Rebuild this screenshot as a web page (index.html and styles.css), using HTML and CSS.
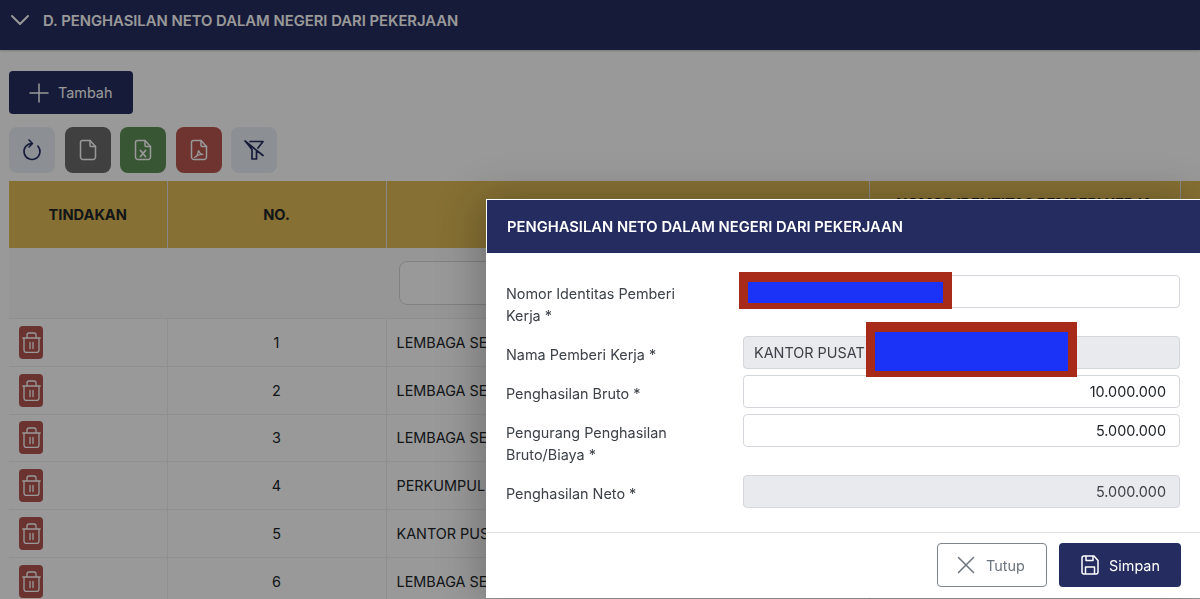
FILE: index.html
```html
<!DOCTYPE html>
<html lang="id">
<head>
<meta charset="utf-8">
<title>Penghasilan Neto Dalam Negeri dari Pekerjaan</title>
<link rel="stylesheet" href="styles.css">
</head>
<body>
<svg class="defs" width="0" height="0" aria-hidden="true">
  <symbol id="trash" viewBox="0 0 19 21">
    <path d="M.8 6h17.400M2 6v12a2.500 2.500 0 0 0 2.500 2.500h10A2.500 2.500 0 0 0 17 18V6M5 6V3a2 2 0 0 1 2-2h5a2 2 0 0 1 2 2v3M8 10.500v6M11 10.500v6" fill="none" stroke="currentColor" stroke-width="1.300" stroke-linecap="round" stroke-linejoin="round"/>
  </symbol>
</svg>

<main class="page">
  <header class="section-head">
    <svg class="chev" width="20" height="12" viewBox="0 0 20 12"><path d="M2 2l8 8 8-8" fill="none" stroke="currentColor" stroke-width="2" stroke-linecap="round" stroke-linejoin="round"/></svg>
    <h2 class="section-title">D. PENGHASILAN NETO DALAM NEGERI DARI PEKERJAAN</h2>
  </header>

  <section class="content">
    <button class="btn-add" type="button">
      <svg width="20" height="20" viewBox="0 0 20 20"><path d="M10 1v18M1 10h18" fill="none" stroke="currentColor" stroke-width="1.500" stroke-linecap="round"/></svg>
      Tambah
    </button>

    <div class="toolbar">
      <button class="tool tool-light" type="button" aria-label="Muat ulang">
        <svg width="24" height="24" viewBox="0 0 24 24" fill="none" stroke="currentColor" stroke-width="1.600" stroke-linecap="round" stroke-linejoin="round"><path d="M12 5.500A8 8 0 1 0 17.800 8M9 2l3.500 3.500L9 9"/></svg>
      </button>
      <button class="tool tool-gray" type="button" aria-label="Dokumen">
        <svg width="24" height="24" viewBox="0 0 24 24" fill="none" stroke="currentColor" stroke-width="1.500" stroke-linecap="round" stroke-linejoin="round"><path d="M14 2.500v5a1 1 0 0 0 1 1h4.500"/><path d="M6.500 2.500H14l5.500 6V19a2.500 2.500 0 0 1-2.500 2.500H7A2.500 2.500 0 0 1 4.500 19V4.500a2 2 0 0 1 2-2z"/></svg>
      </button>
      <button class="tool tool-green" type="button" aria-label="Excel">
        <svg width="24" height="24" viewBox="0 0 24 24" fill="none" stroke="currentColor" stroke-width="1.500" stroke-linecap="round" stroke-linejoin="round"><path d="M14 2.500v5a1 1 0 0 0 1 1h4.500"/><path d="M6.500 2.500H14l5.500 6V19a2.500 2.500 0 0 1-2.500 2.500H7A2.500 2.500 0 0 1 4.500 19V4.500a2 2 0 0 1 2-2z"/><path d="M9.500 12.500l5 6M14.500 12.500l-5 6" stroke-width="1.800"/></svg>
      </button>
      <button class="tool tool-red" type="button" aria-label="PDF">
        <svg width="24" height="24" viewBox="0 0 24 24" fill="none" stroke="currentColor" stroke-width="1.500" stroke-linecap="round" stroke-linejoin="round"><path d="M14 2.500v5a1 1 0 0 0 1 1h4.500"/><path d="M6.500 2.500H14l5.500 6V19a2.500 2.500 0 0 1-2.500 2.500H7A2.500 2.500 0 0 1 4.500 19V4.500a2 2 0 0 1 2-2z"/><path d="M7.500 19.500c2-1 3.500-3.500 4-7 .8 2.500 2 3.500 4.500 4-3-.2-6 .8-8.500 3z" stroke-width="1.200"/></svg>
      </button>
      <button class="tool tool-light" type="button" aria-label="Hapus filter">
        <svg width="24" height="24" viewBox="0 0 24 24" fill="none" stroke="currentColor" stroke-width="1.700" stroke-linecap="round" stroke-linejoin="round"><path d="M8 3.500h13l-5 6.500M14.500 12v9h-4.500v-9.500L4 4M3 3l18 14.500"/></svg>
      </button>
    </div>

    <div class="table-wrap">
      <table class="grid">
        <colgroup>
          <col class="c1"><col class="c2"><col class="c3"><col class="c4"><col class="c5">
        </colgroup>
        <thead>
          <tr class="head-row">
            <th>TINDAKAN</th>
            <th>NO.</th>
            <th></th>
            <th>NOMOR IDENTITAS PEMBERI KERJA<br>&nbsp;</th>
            <th></th>
          </tr>
          <tr class="filter-row">
            <td></td>
            <td></td>
            <td><div class="filter-box"></div></td>
            <td></td>
            <td></td>
          </tr>
        </thead>
        <tbody>
          <tr><td><span class="del"><svg width="19" height="21"><use href="#trash"/></svg></span></td><td class="num">1</td><td>LEMBAGA SE</td><td></td><td></td></tr>
          <tr><td><span class="del"><svg width="19" height="21"><use href="#trash"/></svg></span></td><td class="num">2</td><td>LEMBAGA SE</td><td></td><td></td></tr>
          <tr><td><span class="del"><svg width="19" height="21"><use href="#trash"/></svg></span></td><td class="num">3</td><td>LEMBAGA SE</td><td></td><td></td></tr>
          <tr><td><span class="del"><svg width="19" height="21"><use href="#trash"/></svg></span></td><td class="num">4</td><td>PERKUMPUL</td><td></td><td></td></tr>
          <tr><td><span class="del"><svg width="19" height="21"><use href="#trash"/></svg></span></td><td class="num">5</td><td>KANTOR PUS</td><td></td><td></td></tr>
          <tr><td><span class="del"><svg width="19" height="21"><use href="#trash"/></svg></span></td><td class="num">6</td><td>LEMBAGA SE</td><td></td><td></td></tr>
        </tbody>
      </table>
    </div>
  </section>
</main>

<div class="backdrop"></div>

<div class="modal" role="dialog" aria-modal="true">
  <div class="modal-head">PENGHASILAN NETO DALAM NEGERI DARI PEKERJAAN</div>
  <form class="modal-body">
    <label class="lbl">Nomor Identitas Pemberi Kerja *</label>
    <div class="field"></div>
    <label class="lbl">Nama Pemberi Kerja *</label>
    <div class="field field-off">KANTOR PUSAT</div>
    <label class="lbl">Penghasilan Bruto *</label>
    <div class="field field-num">10.000.000</div>
    <label class="lbl">Pengurang Penghasilan Bruto/Biaya *</label>
    <div class="field field-num">5.000.000</div>
    <label class="lbl">Penghasilan Neto *</label>
    <div class="field field-num field-off">5.000.000</div>
  </form>
  <div class="modal-foot">
    <button class="btn btn-close" type="button">
      <svg width="20" height="20" viewBox="0 0 20 20"><path d="M2.500 2.500l15 15M17.500 2.500l-15 15" fill="none" stroke="currentColor" stroke-width="1.500" stroke-linecap="round"/></svg>
      Tutup
    </button>
    <button class="btn btn-save" type="button">
      <svg width="20" height="22" viewBox="0 0 20 22" fill="none" stroke="currentColor" stroke-width="1.500" stroke-linejoin="round"><path d="M4 2h10l4 4.500V18a2 2 0 0 1-2 2H4a2 2 0 0 1-2-2V4a2 2 0 0 1 2-2z"/><path d="M6 2v4.500h7V2M5.500 20v-7h9v7"/></svg>
      Simpan
    </button>
  </div>
  <span class="mask mask-a"><span class="mask-fill"></span></span>
  <span class="mask mask-b"><span class="mask-fill"></span></span>
</div>
</body>
</html>
```
FILE: styles.css
```css
* { box-sizing: border-box; }
html, body { height: 100%; }
body {
  margin: 0;
  overflow: hidden;
  background: #fff;
  color: #212529;
  font-family: Inter, "Liberation Sans", sans-serif;
  font-size: 14.400px;
}
.defs { position: absolute; }
button { font: inherit; cursor: pointer; }

.section-head {
  height: 50px;
  background: #252d60;
  color: #fff;
  display: flex;
  align-items: flex-start;
  gap: 13px;
  padding: 12px 0 0 10px;
  box-shadow: 0 1px 2px rgba(0,0,0,.2);
}
.chev { margin-top: 2px; }
.section-title { margin: 0; font-size: 14.800px; line-height: 18px; font-weight: 600; }

.content { padding: 21px 0 0 9px; }

.btn-add {
  display: flex;
  align-items: center;
  gap: 9px;
  width: 124px;
  height: 43px;
  padding: 0 0 0 20px;
  border: 0;
  border-radius: 4px;
  background: #252d60;
  color: #fff;
}

.toolbar { display: flex; gap: 9.500px; margin-top: 13px; }
.tool {
  width: 46px;
  height: 46px;
  padding: 0;
  border: 0;
  border-radius: 8px;
  display: flex;
  align-items: center;
  justify-content: center;
  color: #fff;
}
.tool-light { background: #e9eff5; color: #252d60; }
.tool-gray { background: #6c6c6c; }
.tool-green { background: #5e9056; }
.tool-red { background: #b9584f; }

.table-wrap { margin-top: 8px; overflow: hidden; }
.grid { border-collapse: collapse; table-layout: fixed; width: 1400px; }
.c1 { width: 158px; }
.c2 { width: 219px; }
.c3 { width: 483px; }
.c4 { width: 311px; }
.c5 { width: 229px; }
.head-row th {
  height: 67px;
  background: #e0bb55;
  border-right: 1px solid #e3e3e3;
  color: #212529;
  font-size: 14.600px;
  font-weight: 700;
  text-align: center;
  line-height: 22px;
  padding: 0;
}
.filter-row td { height: 69px; padding: 13px 13px; background: #fbfbfb; }
.filter-box { height: 44px; border: 1px solid #d5d7da; border-radius: 8px; background: #fff; }
tbody td {
  height: 47.800px;
  padding: 0 10px;
  border: 1px solid #eee;
  border-left: 0;
  white-space: nowrap;
}
tbody td.num { text-align: center; }
.del {
  display: flex;
  align-items: center;
  justify-content: center;
  width: 24px;
  height: 33px;
  border-radius: 4px;
  background: #b35650;
  color: #fff;
}

.backdrop { position: fixed; inset: 0; background: rgba(0,0,0,.4); }

.modal {
  position: absolute;
  left: 486px;
  top: 199px;
  width: 714px;
  height: 399px;
  background: #fff;
  border: 1px solid #fff;
  border-right: 0;
  box-shadow: -6px 0 40px rgba(0,0,0,.25);
  display: flex;
  flex-direction: column;
}
.modal-head {
  height: 53px;
  flex: none;
  background: #252d60;
  color: #fff;
  font-size: 14.750px;
  font-weight: 600;
  line-height: 55px;
  padding-left: 20px;
}
.modal-body {
  flex: 1;
  display: grid;
  grid-template-columns: 237px 437px;
  align-content: start;
  row-gap: 6px;
  padding: 22px 0 0 19px;
  color: #3d4148;
}
.lbl { padding: 8px 40px 3px 0; line-height: 22px; }
.field {
  height: 33px;
  border: 1px solid #d3d6da;
  border-radius: 4px;
  background: #fff;
  padding: 0 13px 0 10px;
  line-height: 31px;
  color: #212529;
}
.field-off { background: #e9eaee; color: #3d4148; }
.field-num { text-align: right; }

.modal-foot {
  flex: none;
  height: 65px;
  border-top: 1px solid #dee2e6;
  display: flex;
  justify-content: flex-end;
  gap: 12px;
  padding: 10px 19px 0 0;
}
.btn {
  height: 44px;
  border-radius: 4px;
  display: flex;
  align-items: center;
  justify-content: center;
  gap: 9px;
}
.btn-close { width: 110px; background: #fff; border: 1px solid #7d848c; color: #6c757d; padding: 0 3px 0 0; gap: 10px; }
.btn-save { width: 122px; background: #252d60; border: 0; color: #fff; }

.mask {
  position: absolute;
  background: #a82b19;
  display: flex;
}
.mask-fill { flex: 1; background: #1a33f6; }
.mask-a { left: 252px; top: 72px; width: 213px; height: 37px; padding: 10px 9px 6px; }
.mask-b { left: 379px; top: 122px; width: 211px; height: 55px; padding: 10px 9px 6px; }
```
